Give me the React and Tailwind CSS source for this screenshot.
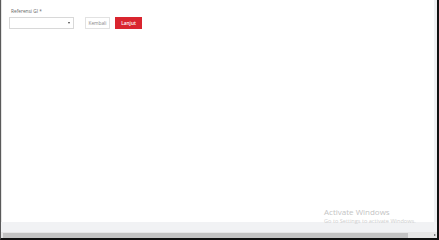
import React from 'react';

const App = () => {
  return (
    <div className="relative w-[439px] h-[240px] flex flex-col bg-white border-l border-l-[#5a5a5a] border-r-2 border-r-[#111] border-b-2 border-b-[#111] overflow-hidden" style={{ fontFamily: '"Open Sans", "Liberation Sans", sans-serif' }}>
      <div className="flex flex-1 min-h-0">
        <div className="w-px bg-[#e4e4e4]"></div>
        <div className="flex-1 bg-white pl-[7px] pt-[8px]">
          <div className="text-[4.8px] leading-[6px] text-[#666] ml-[2px]">Referensi GI *</div>
          <div className="flex items-center mt-[3px]">
            <div className="w-[65px] h-[12px] border border-[#d8d8d8] bg-white flex items-center justify-end pr-[3px]">
              <span className="block w-0 h-0 border-l-[1.5px] border-r-[1.5px] border-t-[2px] border-l-transparent border-r-transparent border-t-[#444]"></span>
            </div>
            <button className="ml-[11px] w-[25px] h-[12px] border border-[#e2e2e2] bg-white text-[4.8px] text-[#888] leading-none">Kembali</button>
            <button className="ml-[5px] w-[27px] h-[12px] bg-[#d9252f] text-[4.8px] text-white font-semibold leading-none">Lanjut</button>
          </div>
        </div>
        <div className="w-[3px] bg-[#eef0f2]"></div>
      </div>
      <div className="h-[10px] bg-[#f1f2f4]"></div>
      <div className="h-[6px] bg-[#e6e6e6] flex items-center">
        <div className="ml-[2px] w-[405px] h-[5px] bg-[#c3c3c3]"></div>
        <div className="flex-1"></div>
        <span className="mr-[1px] block w-0 h-0 border-t-[1.5px] border-b-[1.5px] border-l-[2px] border-t-transparent border-b-transparent border-l-[#555]"></span>
      </div>
      <div className="absolute left-[323px] top-[207px] text-[#c4c4c4] pointer-events-none">
        <div className="text-[8px] leading-[10px]">Activate Windows</div>
        <div className="text-[5.6px] leading-[8px] text-[#cfcfcf]">Go to Settings to activate Windows.</div>
      </div>
    </div>
  );
};

export default App;
